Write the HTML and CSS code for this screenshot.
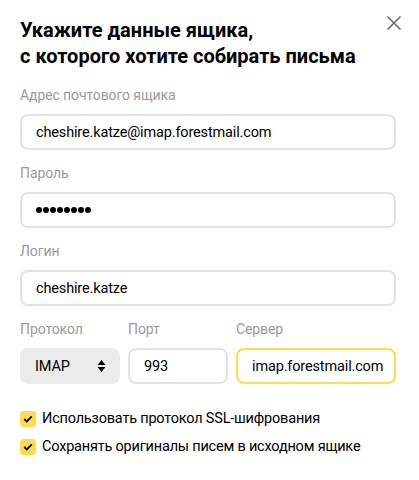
FILE: index.html
```html
<!DOCTYPE html>
<html lang="ru">
<head>
<meta charset="utf-8">
<link rel="stylesheet" href="styles.css">
</head>
<body>
<div class="dialog">
  <button class="close" aria-label="Закрыть">
    <svg width="16" height="16" viewBox="0 0 16 16"><path d="M1.5 1.5 L14.5 14.5 M14.5 1.5 L1.5 14.5" stroke="#6b6b6b" stroke-width="1.6" fill="none"/></svg>
  </button>
  <h1 class="title">Укажите данные ящика,<br>с которого хотите собирать письма</h1>

  <div class="field">
    <div class="label">Адрес почтового ящика</div>
    <div class="input">cheshire.katze@imap.forestmail.com</div>
  </div>
  <div class="field">
    <div class="label">Пароль</div>
    <div class="input password"><span class="dot"></span><span class="dot"></span><span class="dot"></span><span class="dot"></span><span class="dot"></span><span class="dot"></span><span class="dot"></span><span class="dot"></span></div>
  </div>
  <div class="field">
    <div class="label">Логин</div>
    <div class="input">cheshire.katze</div>
  </div>

  <div class="row">
    <div class="col col-proto">
      <div class="label">Протокол</div>
      <div class="select">
        <span>IMAP</span>
        <svg width="9" height="14" viewBox="0 0 9 14"><path d="M4.5 1 L8.5 6 H0.5 Z M0.5 8 H8.5 L4.5 13 Z" fill="#000"/></svg>
      </div>
    </div>
    <div class="col col-port">
      <div class="label">Порт</div>
      <div class="input">993</div>
    </div>
    <div class="col col-server">
      <div class="label">Сервер</div>
      <div class="input focused">imap.forestmail.com</div>
    </div>
  </div>

  <div class="checks">
    <label class="check"><span class="box"><svg width="10" height="8" viewBox="0 0 10 8"><path d="M1.2 4 L3.8 6.4 L8.8 1.4" stroke="#000" stroke-width="1.8" fill="none"/></svg></span>Использовать протокол SSL-шифрования</label>
    <label class="check"><span class="box"><svg width="10" height="8" viewBox="0 0 10 8"><path d="M1.2 4 L3.8 6.4 L8.8 1.4" stroke="#000" stroke-width="1.8" fill="none"/></svg></span>Сохранять оригиналы писем в исходном ящике</label>
  </div>
</div>
</body>
</html>
```

FILE: styles.css
```css
* { box-sizing: border-box; }
html, body { margin: 0; background: #fff; }
body {
  font-family: Roboto, "Noto Sans", sans-serif;
  color: #000;
}
.dialog {
  position: relative;
  width: 419px;
  padding: 17px 23px 20px 20px;
}
.close {
  position: absolute;
  top: 15px;
  right: 17px;
  border: 0;
  background: none;
  padding: 0;
  width: 16px;
  height: 16px;
  cursor: pointer;
}
.close svg { display: block; }
.title {
  margin: 0 0 17px;
  font-size: 20px;
  font-weight: 700;
  line-height: 26px;
}
.field { margin-bottom: 14px; }
.label {
  font-size: 14px;
  line-height: 18px;
  color: #999;
  margin-bottom: 10px;
  letter-spacing: -0.1px;
}
.input {
  height: 36px;
  border: 2px solid #e2e2e2;
  border-radius: 8px;
  padding: 0 14px;
  display: flex;
  align-items: center;
  font-size: 14.5px;
  letter-spacing: -0.15px;
  white-space: nowrap;
}
.password { gap: 1px; }
.dot {
  width: 6px;
  height: 6px;
  border-radius: 50%;
  background: #000;
}
.row {
  display: flex;
  gap: 8px;
  margin-top: 2px;
}
.col { min-width: 0; }
.col-proto { width: 100px; flex: none; }
.col-port { width: 100px; flex: none; }
.col-server { flex: 1; }
.select {
  height: 36px;
  background: #ebebeb;
  border-radius: 8px;
  padding: 0 14px 0 15px;
  display: flex;
  align-items: center;
  justify-content: space-between;
  font-size: 14.5px;
  letter-spacing: -0.15px;
}
.select svg { display: block; }
.focused { border-color: #ffdb4d; }
.checks {
  margin-top: 27px;
  display: flex;
  flex-direction: column;
  gap: 12px;
}
.check {
  display: flex;
  align-items: center;
  gap: 6px;
  font-size: 14.5px;
  letter-spacing: -0.2px;
  line-height: 16px;
}
.box {
  width: 16px;
  height: 16px;
  border-radius: 4px;
  background: #ffdb4d;
  display: flex;
  align-items: center;
  justify-content: center;
  flex: none;
}
.box svg { display: block; }
```
